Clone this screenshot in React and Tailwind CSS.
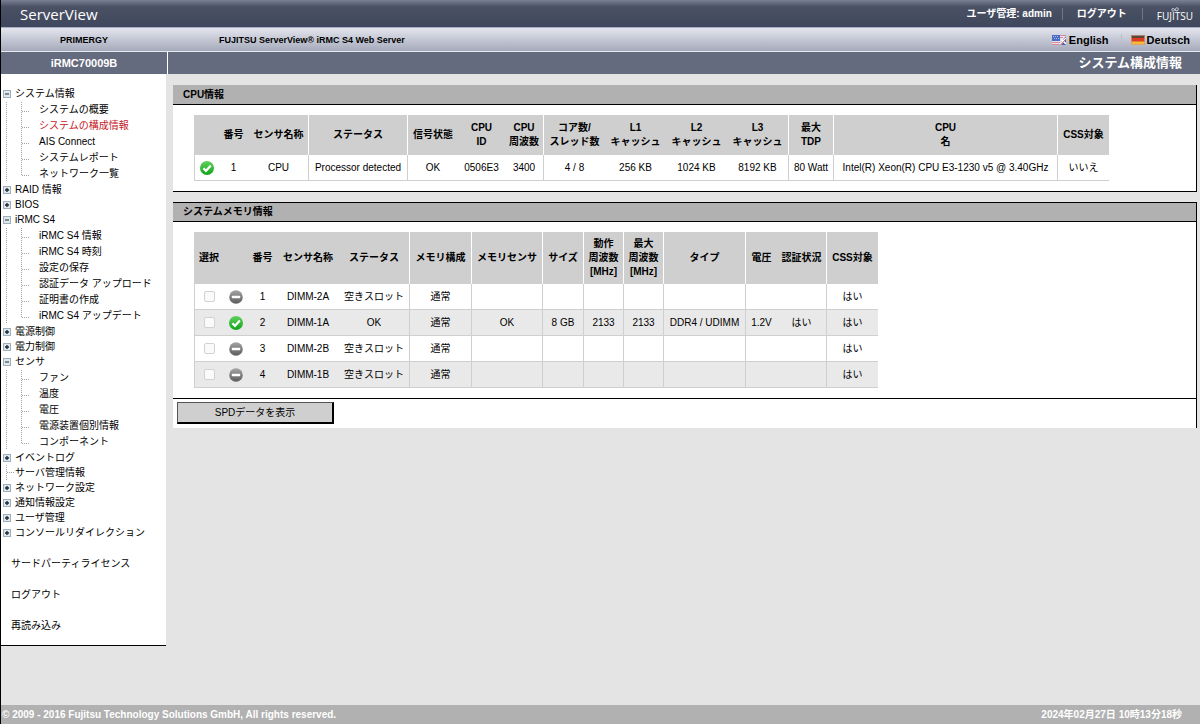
// src/App.jsx
import { useState } from "react";

// ---- navigation tree ----
const NAV = [
    {
        label: "システム情報",
        children: [
            "システムの概要",
            "システムの構成情報",
            "AIS Connect",
            "システムレポート",
            "ネットワーク一覧",
        ],
    },
    { label: "RAID 情報", expandable: true },
    { label: "BIOS", expandable: true },
    {
        label: "iRMC S4",
        children: [
            "iRMC S4 情報",
            "iRMC S4 時刻",
            "設定の保存",
            "認証データ アップロード",
            "証明書の作成",
            "iRMC S4 アップデート",
        ],
    },
    { label: "電源制御", expandable: true },
    { label: "電力制御", expandable: true },
    {
        label: "センサ",
        children: ["ファン", "温度", "電圧", "電源装置個別情報", "コンポーネント"],
    },
    { label: "イベントログ", expandable: true },
    { label: "サーバ管理情報" },
    { label: "ネットワーク設定", expandable: true },
    { label: "通知情報設定", expandable: true },
    { label: "ユーザ管理", expandable: true },
    { label: "コンソールリダイレクション", expandable: true },
];

const CURRENT = "システムの構成情報";

// ---- tables: width, header lines, divider on the right ----
const CPU_COLS = [
    { w: "w-[24px]", head: [] },
    { w: "w-[31px]", head: ["番号"] },
    { w: "w-[60px]", head: ["センサ名称"], line: true },
    { w: "w-[99px]", head: ["ステータス"], line: true },
    { w: "w-[50px]", head: ["信号状態"] },
    { w: "w-[47px]", head: ["CPU", "ID"] },
    { w: "w-[39px]", head: ["CPU", "周波数"], line: true },
    { w: "w-[61px]", head: ["コア数/", "スレッド数"] },
    { w: "w-[61px]", head: ["L1", "キャッシュ"] },
    { w: "w-[61px]", head: ["L2", "キャッシュ"] },
    { w: "w-[62px]", head: ["L3", "キャッシュ"], line: true },
    { w: "w-[45px]", head: ["最大", "TDP"], line: true },
    { w: "w-[224px]", head: ["CPU", "名"], line: true },
    { w: "w-[51px]", head: ["CSS対象"] },
];

const MEM_COLS = [
    { w: "w-[30px]", head: ["選択"] },
    { w: "w-[24px]", head: [] },
    { w: "w-[29px]", head: ["番号"] },
    { w: "w-[62px]", head: ["センサ名称"] },
    { w: "w-[71px]", head: ["ステータス"], line: true },
    { w: "w-[62px]", head: ["メモリ構成"], line: true },
    { w: "w-[71px]", head: ["メモリセンサ"], line: true },
    { w: "w-[41px]", head: ["サイズ"], line: true },
    { w: "w-[40px]", head: ["動作", "周波数", "[MHz]"], line: true },
    { w: "w-[40px]", head: ["最大", "周波数", "[MHz]"], line: true },
    { w: "w-[82px]", head: ["タイプ"], line: true },
    { w: "w-[31px]", head: ["電圧"] },
    { w: "w-[50px]", head: ["認証状況"], line: true },
    { w: "w-[51px]", head: ["CSS対象"] },
];

const CPU_ROW = ["1", "CPU", "Processor detected", "OK", "0506E3", "3400", "4 / 8", "256 KB", "1024 KB", "8192 KB", "80 Watt", "Intel(R) Xeon(R) CPU E3-1230 v5 @ 3.40GHz", "いいえ"];

const MEM_ROWS = [
    { ok: false, cells: ["1", "DIMM-2A", "空きスロット", "通常", "", "", "", "", "", "", "", "はい"] },
    { ok: true, cells: ["2", "DIMM-1A", "OK", "通常", "OK", "8 GB", "2133", "2133", "DDR4 / UDIMM", "1.2V", "はい", "はい"] },
    { ok: false, cells: ["3", "DIMM-2B", "空きスロット", "通常", "", "", "", "", "", "", "", "はい"] },
    { ok: false, cells: ["4", "DIMM-1B", "空きスロット", "通常", "", "", "", "", "", "", "", "はい"] },
];

// ---- icons ----
function OkIcon() {
    return (
        <svg className="mx-auto block" width="14" height="14" viewBox="0 0 14 14" role="img" aria-label="OK">
            <defs>
                <linearGradient id="okFill" x1="0" y1="0" x2="0" y2="1">
                    <stop offset="0" stopColor="#62cf5c" />
                    <stop offset="1" stopColor="#10a51b" />
                </linearGradient>
            </defs>
            <circle cx="7" cy="7" r="7" fill="url(#okFill)" />
            <path d="M3.4 7.2 L6 9.8 L10.8 4.6" fill="none" stroke="#fff" strokeWidth="2.2" />
        </svg>
    );
}

function EmptyIcon() {
    return (
        <svg className="mx-auto block" width="14" height="14" viewBox="0 0 14 14" role="img" aria-label="空き">
            <defs>
                <linearGradient id="emptyFill" x1="0" y1="0" x2="0" y2="1">
                    <stop offset="0" stopColor="#a5a5a5" />
                    <stop offset="1" stopColor="#5c5c5c" />
                </linearGradient>
            </defs>
            <circle cx="7" cy="7" r="6.8" fill="url(#emptyFill)" />
            <rect x="2.8" y="5.8" width="8.4" height="2.4" rx="0.6" fill="#fff" />
        </svg>
    );
}

function ToggleIcon({ open }) {
    return (
        <svg className="block" width="8" height="8" viewBox="0 0 8 8" aria-hidden="true">
            <rect x="0.5" y="0.5" width="7" height="7" fill="#dfe7ec" stroke="#9db0bb" />
            <path d={open ? "M2 4h4" : "M2 4h4M4 2v4"} stroke="#1d2a33" strokeWidth={open ? 1 : 1.4} />
        </svg>
    );
}

// dotted guide lines in front of a leaf
function Guide({ last }) {
    return (
        <svg className="block shrink-0" width="38" height="16" viewBox="0 0 38 16" aria-hidden="true">
            <g stroke="#a3a3a3" strokeDasharray="1 1" fill="none">
                <path d="M5.5 0V16" />
                <path d={last ? "M20.5 0V9" : "M20.5 0V16"} />
                <path d="M21 9.5H28" />
            </g>
        </svg>
    );
}

function EnglishFlag() {
    return (
        <svg width="14" height="10" viewBox="0 0 14 10" aria-hidden="true">
            <rect width="14" height="10" fill="#e9e2ee" />
            <rect width="8" height="6" fill="#4a6cc4" />
            <path d="M1 1.5h6M2 3.5h5" stroke="#a9bdec" strokeDasharray="1 1" />
            <path d="M8 0.5h6M8 2.5h3" stroke="#d98a94" />
            <path d="M0 7.5h8M0 9.5h7" stroke="#d98a94" />
            <path d="M7 10L14 1V10Z" fill="#4a5fae" />
            <path d="M8 10L14 3M10 5L14 9" stroke="#fff" strokeWidth="1.6" />
            <path d="M8.5 10L14 4" stroke="#cc3a45" strokeWidth="0.8" />
        </svg>
    );
}

function GermanFlag() {
    return (
        <svg width="14" height="10" viewBox="0 0 14 10" aria-hidden="true">
            <rect width="14" height="3.4" fill="#5c463a" />
            <rect y="3" width="14" height="3.8" fill="#dd3a22" />
            <rect y="6.6" width="14" height="3.4" fill="#f4bb35" />
            <rect x="0.5" y="0.5" width="13" height="9" fill="none" stroke="#d09a7c" strokeOpacity="0.7" />
        </svg>
    );
}

function FujitsuLogo() {
    return (
        <div className="flex flex-col items-center text-white">
            <svg className="block" width="10" height="5" viewBox="0 0 10 5" aria-hidden="true">
                <path
                    d="M5 3C4 1.6 3.4 1.3 2.6 1.6C1.5 2 1.6 3.8 2.7 4C3.7 4.2 4.4 3.6 5 2.6C5.7 1.2 6.6 0.3 7.6 0.9C8.7 1.6 8.3 3.7 7.1 3.8C6.2 3.9 5.6 3.6 5 3Z"
                    fill="none"
                    stroke="#e6e8ee"
                    strokeWidth="0.9"
                />
            </svg>
            <span className="font-['Liberation_Sans_Narrow','Open_Sans',sans-serif] text-[10px] leading-[9px] font-normal">FUJITSU</span>
        </div>
    );
}

function Divider({ className }) {
    return <span className={`h-3 w-px ${className}`} />;
}

// ---- layout pieces ----
function Header() {
    return (
        <header className="font-bold">
            <div className="flex h-[27px] items-center justify-between bg-linear-to-b from-[#7b8194] via-[#4b5164] via-25% to-[#3e475d] pr-[7px] pl-[19px] text-white">
                <span className="font-['Open_Sans',sans-serif] text-[15px] leading-5 font-normal">ServerView</span>
                <div className="flex items-center">
                    <span>ユーザ管理: admin</span>
                    <Divider className="mx-[10px] bg-[#6f7689]" />
                    <a href="#logout" className="mx-1">ログアウト</a>
                    <Divider className="mr-[14px] ml-[11px] bg-[#6f7689]" />
                    <FujitsuLogo />
                </div>
            </div>
            <div className="flex h-6 items-center border-t border-[#a9aec0] bg-linear-to-b from-[#e4e6ee] to-[#a5aabb] pr-[10px]">
                <span className="w-[166px] text-center text-[9px]">PRIMERGY</span>
                <span className="ml-[52px] flex-1 text-[9px]">FUJITSU ServerView® iRMC S4 Web Server</span>
                <a href="#en" className="flex items-center gap-[3px] text-[11px]">
                    <EnglishFlag />
                    English
                </a>
                <Divider className="mr-[9px] ml-[12px] bg-[#b9bdca]" />
                <a href="#de" className="flex items-center gap-[2px] text-[11px]">
                    <GermanFlag />
                    Deutsch
                </a>
            </div>
            <div className="flex h-[23px] items-stretch border-t border-[#e8eaf0] bg-[#656b7e] text-white">
                <span className="flex w-[167px] items-center justify-center border-r border-white text-[11px]">iRMC70009B</span>
                <h1 className="flex flex-1 items-center justify-end pr-[18px] text-[13px]">システム構成情報</h1>
            </div>
        </header>
    );
}

function NavGroup({ item }) {
    const [open, setOpen] = useState(Boolean(item.children));
    const canToggle = item.children || item.expandable;

    return (
        <li>
            <div className={`flex items-center ${item.children ? "h-4" : "h-[15px]"}`}>
                {canToggle ? (
                    <button
                        type="button"
                        className="mr-1 ml-[2px]"
                        aria-label={item.label}
                        aria-expanded={open}
                        onClick={() => setOpen(!open)}
                    >
                        <ToggleIcon open={open} />
                    </button>
                ) : (
                    <svg className="block w-[14px]" height="15" viewBox="0 0 14 15" aria-hidden="true">
                        <path d="M5.5 0V15M6 7.5H13" stroke="#a3a3a3" strokeDasharray="1 1" />
                    </svg>
                )}
                <a href="#nav">{item.label}</a>
            </div>
            {open && item.children && (
                <ul>
                    {item.children.map((child, i) => (
                        <li key={child} className="flex h-4 items-center">
                            <Guide last={i === item.children.length - 1} />
                            <a href="#nav" className={child === CURRENT ? "text-[#c4222a]" : ""}>
                                {child}
                            </a>
                        </li>
                    ))}
                </ul>
            )}
        </li>
    );
}

function Sidebar() {
    return (
        <nav className="w-[165px] shrink-0 self-start border-b border-black bg-white pt-3 pb-1 whitespace-nowrap">
            <ul>
                {NAV.map((item) => (
                    <NavGroup key={item.label} item={item} />
                ))}
            </ul>
            <ul className="mt-2 pl-[10px] leading-[31px]">
                <li><a href="#licenses">サードパーティライセンス</a></li>
                <li><a href="#logout">ログアウト</a></li>
                <li><a href="#reload">再読み込み</a></li>
            </ul>
        </nav>
    );
}

function TableHead({ cols, height }) {
    return (
        <>
            <colgroup>
                {cols.map((c, i) => (
                    <col key={i} className={c.w} />
                ))}
            </colgroup>
            <thead>
                <tr className={`bg-[#cfcfcf] ${height}`}>
                    {cols.map((c, i) => (
                        <th key={i} scope="col" className={`p-0 leading-[14px] ${c.line ? "border-r border-white" : ""}`}>
                            {c.head.map((t) => (
                                <span key={t} className="block">{t}</span>
                            ))}
                        </th>
                    ))}
                </tr>
            </thead>
        </>
    );
}

function cellClass(col) {
    return `p-0 ${col.line ? "border-r border-[#cfcfcf]" : ""}`;
}

function CpuPanel() {
    return (
        <section className="border-r border-b border-black bg-white">
            <h2 className="flex h-5 items-center border-b border-black bg-[#b1b1b1] pl-[10px] font-bold">CPU情報</h2>
            <div className="px-[21px] py-[10px]">
                <table className="w-[915px] table-fixed border-separate border-spacing-0 text-center whitespace-nowrap">
                    <TableHead cols={CPU_COLS} height="h-10" />
                    <tbody>
                        <tr className="h-[26px] [&>td]:border-b [&>td]:border-[#cfcfcf]">
                            <td className="border-l p-0"><OkIcon /></td>
                            {CPU_ROW.map((v, i) => (
                                <td key={i} className={cellClass(CPU_COLS[i + 1])}>{v}</td>
                            ))}
                        </tr>
                    </tbody>
                </table>
            </div>
        </section>
    );
}

function MemoryPanel() {
    return (
        <section className="border-t border-r border-black bg-white">
            <h2 className="flex h-[19px] items-center border-b border-black bg-[#b1b1b1] pl-[10px] font-bold">システムメモリ情報</h2>
            <div className="border-b border-black px-[21px] py-[10px]">
                <table className="w-[684px] table-fixed border-separate border-spacing-0 text-center whitespace-nowrap">
                    <TableHead cols={MEM_COLS} height="h-[52px]" />
                    <tbody>
                        {MEM_ROWS.map((row) => (
                            <tr
                                key={row.cells[0]}
                                className="h-[26px] even:bg-[#e9e9e9] [&>td]:border-b [&>td]:border-[#cfcfcf]"
                            >
                                <td className="border-l p-0">
                                    <input
                                        type="checkbox"
                                        disabled
                                        aria-label={row.cells[1]}
                                        className="mx-auto block size-[11px] appearance-none rounded-xs border border-[#d2d2d2] bg-[#fafafa]"
                                    />
                                </td>
                                <td className="p-0">{row.ok ? <OkIcon /> : <EmptyIcon />}</td>
                                {row.cells.map((v, i) => (
                                    <td key={i} className={cellClass(MEM_COLS[i + 2])}>{v}</td>
                                ))}
                            </tr>
                        ))}
                    </tbody>
                </table>
            </div>
            <div className="px-1 pt-[3px] pb-1">
                <button
                    type="button"
                    className="block h-[22px] w-[157px] border border-r-2 border-b-2 border-[#555] border-r-black border-b-black bg-[#cfcfcf]"
                >
                    SPDデータを表示
                </button>
            </div>
        </section>
    );
}

export default function App() {
    return (
        <div className="flex min-h-screen flex-col border-l border-black bg-[#e4e4e4] font-['Liberation_Sans','Noto_Sans_CJK_JP',sans-serif] text-[10px] leading-[14px] text-black">
            <Header />
            <div className="flex flex-1 items-start">
                <Sidebar />
                <main className="flex min-w-0 flex-1 flex-col gap-[10px] pt-[11px] pr-[3px] pl-[7px]">
                    <CpuPanel />
                    <MemoryPanel />
                </main>
            </div>
            <footer className="flex h-[19px] items-center justify-between bg-[#b1b1b1] pr-[18px] pl-px font-bold text-white">
                <span>© 2009 - 2016 Fujitsu Technology Solutions GmbH, All rights reserved.</span>
                <time dateTime="2024-02-27T10:13:18">2024年02月27日 10時13分18秒</time>
            </footer>
        </div>
    );
}
